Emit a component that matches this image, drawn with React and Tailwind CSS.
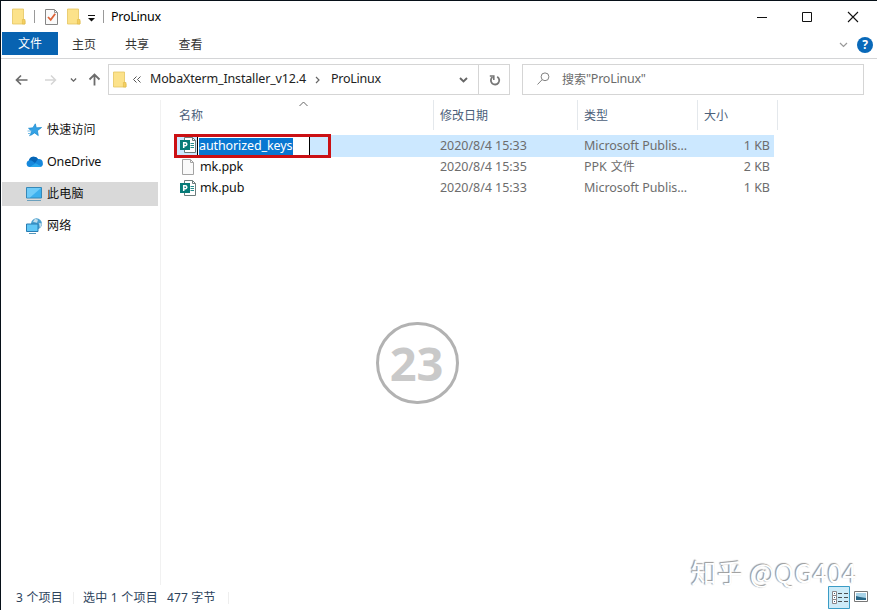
import React from 'react';

const files = [
  { name: 'authorized_keys', date: '2020/8/4 15:33', type: 'Microsoft Publis...', size: '1 KB', icon: 'pub', editing: true },
  { name: 'mk.ppk', date: '2020/8/4 15:35', type: 'PPK', typeSuffix: '文件', size: '2 KB', icon: 'blank' },
  { name: 'mk.pub', date: '2020/8/4 15:33', type: 'Microsoft Publis...', size: '1 KB', icon: 'pub' },
];

function FolderIcon() {
  return (
    <svg width="14" height="17" viewBox="0 0 14 17" className="shrink-0">
      <path d="M.5 1h11v10.500l1.500 1.200V16H.5z" fill="#fce28a" stroke="#e5c55f" strokeWidth=".8" />
      <path d="M10.400 11.500h2.600V16h-2.600z" fill="#f5cf62" stroke="#dfb846" strokeWidth=".6" />
    </svg>
  );
}

function PropertiesIcon() {
  return (
    <svg width="13" height="17" viewBox="0 0 13 17" className="shrink-0">
      <path d="M.5 1.500h9l3 3v12H.5z" fill="#fafafa" stroke="#858585" />
      <path d="M9.500 1.500v3h3" fill="none" stroke="#999" />
      <path d="M3 9l2.700 2.800 4.500-6" fill="none" stroke="#dc6338" strokeWidth="1.8" />
    </svg>
  );
}

function PublisherIcon() {
  return (
    <svg width="16" height="16" viewBox="0 0 16 16" className="block shrink-0">
      <path d="M4.500.5h8l3 3v12h-11z" fill="#fff" stroke="#6c7c7c" />
      <path d="M12.500.5v3h3" fill="none" stroke="#6c7c7c" />
      <path d="M10.500 6.500h3.500M10.500 8.500h3.500M10.500 10.500h3.500" stroke="#268d8c" />
      <path d="M0 3h10v10H0z" fill="#087b78" />
      <path d="M3.700 11V5.700h1.600a1.500 1.500 0 010 3H3.700" fill="none" stroke="#fff" strokeWidth="1.500" />
    </svg>
  );
}

function BlankIcon() {
  return (
    <svg width="16" height="16" viewBox="0 0 16 16" className="block shrink-0">
      <path d="M2.500.5h8l3 3v12h-11z" fill="#fafafa" stroke="#a3a3a3" />
      <path d="M10.500.5v3h3" fill="none" stroke="#a3a3a3" />
    </svg>
  );
}

function Chevron({ className, d = 'M1 2l3.5 3.5L8 2', color = '#666', width = 1.4 }) {
  return (
    <svg width="9" height="8" viewBox="0 0 9 8" className={`shrink-0 ${className || ''}`}>
      <path d={d} fill="none" stroke={color} strokeWidth={width} />
    </svg>
  );
}

function StarIcon() {
  return (
    <svg width="16" height="14" viewBox="0 0 16 14">
      <path d="M9.300.8l1 4 5.300-.3-4.200 3.200.9 4.900-3.700-2.700-4.800 3 1.800-4.700L2.500 5.300l4.400-.5z" fill="#35a2e5" stroke="#1688ce" strokeWidth=".7" />
      <path d="M1.500 8h4M2 10.500h3M3 12.500h2" stroke="#77bce5" />
    </svg>
  );
}

function CloudIcon() {
  return (
    <svg width="17" height="12" viewBox="0 0 17 12">
      <path d="M3.700 11A3.500 3.500 0 013 4.200 5 5 0 0112 3.100a3.800 3.800 0 014.800 4A3.100 3.100 0 0113.900 11z" fill="#1688dc" />
      <path d="M3 4.200A5 5 0 0112 3.100l-3 3.800L5.500 4.500z" fill="#0765b5" />
      <path d="M3.700 11l6-3.800 5.800 3.200-1.600.6z" fill="#27a7ec" />
    </svg>
  );
}

function ComputerIcon() {
  return (
    <svg width="17" height="16" viewBox="0 0 17 16">
      <path d="M.5 1.500h15v10.500H.5z" fill="#3db0ee" stroke="#3688b7" />
      <path d="M1 2h14L4 11.500H1z" fill="#6fcbf8" />
      <path d="M1 14.500h14" stroke="#6ba0bd" />
    </svg>
  );
}

function NetworkIcon() {
  return (
    <svg width="17" height="16" viewBox="0 0 17 16">
      <circle cx="10.500" cy="5.800" r="5.500" fill="#4a9fcf" />
      <path d="M9 .8l3 1-1 3-4-1zM13 5l3 .5-2 5z" fill="#c4dfec" />
      <path d="M.5 6h11.500v7.500H.5z" fill="#61c7f6" stroke="#297cb2" />
      <path d="M3 15.500h7" stroke="#5297bd" />
    </svg>
  );
}

const places = [
  { label: '快速访问', Icon: StarIcon },
  { label: 'OneDrive', Icon: CloudIcon, latin: true },
  { label: '此电脑', Icon: ComputerIcon, active: true },
  { label: '网络', Icon: NetworkIcon },
];

function TitleBar() {
  return (
    <div className="flex h-[31px] shrink-0 items-center pl-[11px]">
      <FolderIcon />
      <span className="ml-[8px] h-[13px] w-px bg-[#999]" />
      <span className="ml-[10px]"><PropertiesIcon /></span>
      <span className="ml-[9px]"><FolderIcon /></span>
      <svg width="8" height="8" viewBox="0 0 8 8" className="mt-0.5 ml-[7px]">
        <path d="M0 1.500h7" stroke="#111" />
        <path d="M0 4h7L3.500 7.500z" fill="#111" />
      </svg>
      <span className="ml-[7px] h-[13px] w-px bg-[#999]" />
      <span className="mt-0.5 ml-[7px] text-[12.5px] tracking-[-0.25px] text-black">ProLinux</span>
      <svg width="105" height="12" viewBox="0 0 105 12" className="mr-[16px] ml-auto">
        <path d="M1 6.500h10M46.500 1.500h9v9h-9z" fill="none" stroke="#111" strokeWidth="1" />
        <path d="M92 1l10 10M102 1L92 11" stroke="#111" strokeWidth="1.1" />
      </svg>
    </div>
  );
}

function RibbonTabs() {
  return (
    <div className="flex h-[27px] shrink-0 border-b border-[#d4d5d7] pl-px text-[12px] text-[#333]">
      <span className="flex h-[23px] w-[56px] items-center justify-center bg-[#0863b1] pt-px text-white">文件</span>
      <span className="flex h-[25px] w-[52px] items-center justify-center">主页</span>
      <span className="flex h-[25px] w-[54px] items-center justify-center">共享</span>
      <span className="flex h-[25px] w-[53px] items-center justify-center">查看</span>
      <div className="mr-[4px] ml-auto flex h-[26px] items-center gap-[9px]">
        <Chevron color="#999" width={1.2} />
        <span className="flex size-4 items-center justify-center rounded-full bg-[#0969b9] text-[12px] font-bold text-white">?</span>
      </div>
    </div>
  );
}

function AddressBar() {
  return (
    <div className="flex h-[41px] shrink-0 items-start pt-[5px]">
      <div className="flex h-[31px] w-[107px] items-center pl-[14px]">
        <svg width="13" height="12" viewBox="0 0 13 12">
          <path d="M12.500 6H1.500M6 1.500L1.500 6 6 10.500" fill="none" stroke="#6c6c6c" strokeWidth="1.700" />
        </svg>
        <svg width="12" height="12" viewBox="0 0 12 12" className="ml-[17px]">
          <path d="M0 6h10.500M6 1.500L10.500 6 6 10.500" fill="none" stroke="#d5d5d5" strokeWidth="1.500" />
        </svg>
        <Chevron className="ml-[12px] scale-75" width={1.8} />
        <svg width="13" height="13" viewBox="0 0 13 13" className="ml-[10px]">
          <path d="M6.500 12.500V1.500M1.500 6.500l5-5 5 5" fill="none" stroke="#6c6c6c" strokeWidth="1.800" />
        </svg>
      </div>
      <div className="flex h-[31px] w-[402px] items-center border border-[#d5d5d5] pl-[4px]">
        <FolderIcon />
        <svg width="8" height="7" viewBox="0 0 8 7" className="ml-[6px]">
          <path d="M3.500 .5l-3 3 3 3M7.500 .5l-3 3 3 3" fill="none" stroke="#555" />
        </svg>
        <span className="ml-[9px] w-[157px] text-[12.5px] tracking-[-0.15px] whitespace-nowrap text-[#222]">MobaXterm_Installer_v12.4</span>
        <Chevron className="ml-[7px]" d="M2 1l3 3-3 3" width={1.2} />
        <span className="ml-[8px] text-[12.5px] tracking-[-0.25px] text-[#222]">ProLinux</span>
        <Chevron className="mr-[10px] ml-auto" width={1.9} />
        <div className="flex h-full w-[31px] items-center justify-center border-l border-[#d5d5d5]">
          <svg width="12" height="12" viewBox="0 0 12 12" className="ml-px">
            <path d="M8.200 2.700A4.200 4.200 0 113.500 3" fill="none" stroke="#777" strokeWidth="1.800" />
            <path d="M.8 2h4v4" fill="none" stroke="#777" strokeWidth="1.600" />
          </svg>
        </div>
      </div>
      <div className="ml-[12px] flex h-[31px] w-[342px] items-center border border-[#d5d5d5] pl-[14px] text-[#6b6b6b]">
        <svg width="13" height="13" viewBox="0 0 13 13" className="-mt-0.5">
          <circle cx="8" cy="4.800" r="3.900" fill="none" stroke="#828282" />
          <path d="M5.200 7.600L.5 12.500" stroke="#828282" />
        </svg>
        <span className="ml-[12px] text-[12px]">搜索</span>
        <span className="text-[12.5px] tracking-[-0.25px]">"ProLinux"</span>
      </div>
    </div>
  );
}

function Sidebar() {
  return (
    <div className="w-[160px] shrink-0 border-r border-[#f1f1f1] pt-[14px] text-[12px] text-[#111]">
      {places.map(({ label, Icon, active, latin }) => (
        <div key={label} className="flex h-8 items-center">
          <div className={`ml-px flex h-6 w-[156px] items-center ${active ? 'bg-[#d9d9d9]' : ''}`}>
            <span className="flex w-[45px] justify-start pl-[24px]"><Icon /></span>
            <span className={latin ? 'text-[12.5px] tracking-[-0.15px]' : 'tracking-[0.2px]'}>{label}</span>
          </div>
        </div>
      ))}
    </div>
  );
}

function FileRow({ file }) {
  return (
    <div className={`flex w-[600px] items-center text-[12.5px] text-[#6d6d6d] ${file.editing ? 'h-[22px] bg-[#cce8ff]' : 'h-[21px]'}`}>
      <div className="flex h-full w-[266px] items-center">
        <div className={file.editing ? '-my-px flex h-6 w-[157px] items-center border-[3px] border-[#cb1014] pl-[3px]' : 'flex items-center pl-[6px]'}>
          <span className="mb-[2px]">{file.icon === 'pub' ? <PublisherIcon /> : <BlankIcon />}</span>
          {file.editing ? (
            <div className="ml-px flex h-[18px] w-[113px] items-center border-x border-black bg-white pl-px">
              <span className="h-[17px] w-[94px] bg-[#0877d1] leading-[15px] tracking-[-0.1px] whitespace-nowrap text-white">{file.name}</span>
            </div>
          ) : (
            <span className="ml-[4px] tracking-[-0.1px] text-[#111]">{file.name}</span>
          )}
        </div>
      </div>
      <span className="w-[144px] tracking-[-0.04px]">{file.date}</span>
      <span className="w-[120px] tracking-[-0.05px]">
        {file.type}
        {file.typeSuffix && <span className="ml-1 text-[12px]">{file.typeSuffix}</span>}
      </span>
      <span className="flex-1 pr-[4px] text-right">{file.size}</span>
    </div>
  );
}

function FileList() {
  return (
    <div className="relative flex-1 pl-[13px]">
      <div className="flex h-[35px] pb-[5px] text-[12px] text-[#4c607a]">
        <div className="relative flex w-[260px] items-center border-r border-[#e4e8ec] pt-px pl-[5px]">
          名称
          <svg width="9" height="6" viewBox="0 0 9 6" className="absolute top-[1px] left-[125px]">
            <path d="M.5 5l4-4 4 4" fill="none" stroke="#666" />
          </svg>
        </div>
        <div className="flex w-[144px] items-center border-r border-[#e4e8ec] pt-px pl-[6px]">修改日期</div>
        <div className="flex w-[120px] items-center border-r border-[#e4e8ec] pt-px pl-[6px]">类型</div>
        <div className="flex w-[80px] items-center border-r border-[#e4e8ec] pt-px pl-[6px]">大小</div>
      </div>
      {files.map((file) => <FileRow key={file.name} file={file} />)}

      {/* Step number */}
      <div className="absolute top-[222px] left-[215px] flex h-[82px] w-[83px] items-center justify-center rounded-full border-[3px] border-[#b2b2b2] pr-[2px] font-['Open_Sans'] text-[47px] font-bold text-[#c9c9c9]">
        23
      </div>
    </div>
  );
}

function StatusBar() {
  return (
    <div className="flex h-[25px] shrink-0 items-center pl-[15px] text-[12px] text-[#2d435c]">
      <span className="w-[57px] tracking-[0.2px] whitespace-nowrap">3 个项目</span>
      <span className="mr-[9px] h-3 w-px bg-[#eee]" />
      <span className="w-[84px] tracking-[0.25px] whitespace-nowrap">选中 1 个项目</span>
      <span className="tracking-[0.15px] whitespace-nowrap">477 字节</span>
      <span className="ml-[12px] h-3 w-px bg-[#eee]" />
      <div className="mr-[9px] ml-auto flex items-center gap-[4px]">
        <svg width="22" height="23" viewBox="0 0 22 23">
          <path d="M.5.5h21v22H.5z" fill="#cdebf8" stroke="#3a9cc6" />
          <path d="M4.500 5.500h4v4h-4zM4.500 9.500h4v4h-4zM4.500 13.500h4v4h-4z" fill="#fff" stroke="#8a8588" />
          <path d="M6 7.500h1M6 11.500h1M6 15.500h1" stroke="#356785" />
          <path d="M10 7.500h4M16 7.500h4M10 11.500h4M16 11.500h4M10 15.500h4M16 15.500h4" stroke="#4c5053" />
        </svg>
        <svg width="14" height="12" viewBox="0 0 14 12" className="-mt-0.5">
          <path d="M.5.5h13v10H.5z" fill="#fff" stroke="#777" />
          <path d="M2 2h10v7H2z" fill="#a8d3e8" />
          <path d="M2 5l4 1 6 1v2H2z" fill="#286787" />
        </svg>
      </div>
    </div>
  );
}

export default function App() {
  return (
    <div className="relative flex h-[610px] w-[877px] flex-col overflow-hidden border-t border-l border-[#071018] bg-white font-['Noto_Sans','Noto_Sans_CJK_SC',sans-serif]">
      <TitleBar />
      <RibbonTabs />
      <AddressBar />
      <div className="flex min-h-0 flex-1">
        <Sidebar />
        <FileList />
      </div>
      <StatusBar />

      {/* Watermark */}
      <div className="absolute top-[554px] left-[690px] font-['Noto_Sans_CJK_SC',sans-serif] text-[26px] leading-[34px] tracking-[0.35px] whitespace-nowrap text-white [text-shadow:-1px_-1px_1px_#999,-1px_0_1px_#aaa]">
        知乎 @QG404
      </div>
    </div>
  );
}
